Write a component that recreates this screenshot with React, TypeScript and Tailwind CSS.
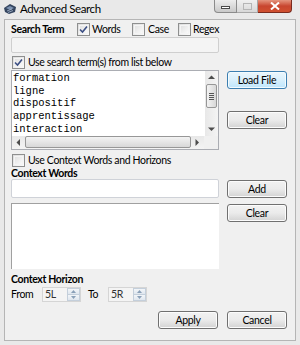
import React from "react";

const ui = { fontFamily: 'Lato, "Noto Sans", sans-serif' };

function Check({ checked }: { checked?: boolean }) {
  return (
    <span className="relative flex h-[13px] w-[13px] shrink-0 items-center justify-center border border-[#8e8f8f] bg-gradient-to-br from-[#dcdcdc] to-[#fbfbfb]">
      <span className="absolute inset-[1px] border border-[#f4f4f4] bg-gradient-to-br from-[#e2e2e2] to-[#f9f9f9]" />
      {checked && (
        <svg width="9" height="9" viewBox="0 0 9 9" className="relative">
          <path d="M1 4.5 L3.5 7 L8 1.5" fill="none" stroke="#3c4f84" strokeWidth="1.6" />
        </svg>
      )}
    </span>
  );
}

function Btn({ label, hot }: { label: string; hot?: boolean }) {
  return (
    <div
      className={
        "flex h-[18px] w-[60px] items-center justify-center rounded-[3px] border text-[10.5px] tracking-[-0.3px] text-black " +
        (hot
          ? "border-[#3c7fb1] bg-gradient-to-b from-[#eaf6fd] via-[#d9f0fc] to-[#bee6fd] shadow-[inset_0_0_0_1px_#f4fbfe]"
          : "border-[#707070] bg-gradient-to-b from-[#f2f2f2] via-[#ebebeb] to-[#d3d3d3] shadow-[inset_0_0_0_1px_#fcfcfc]")
      }
    >
      {label}
    </div>
  );
}

function Arrow({ dir }: { dir: "up" | "down" | "left" | "right" }) {
  const d = {
    up: "M0 4 L3.5 0.5 L7 4 Z",
    down: "M0 0.5 L3.5 4 L7 0.5 Z",
    left: "M4 0 L0.5 3.5 L4 7 Z",
    right: "M0.5 0 L4 3.5 L0.5 7 Z",
  }[dir];
  const v = dir === "up" || dir === "down";
  return (
    <svg width={v ? 7 : 5} height={v ? 5 : 7} viewBox={v ? "0 0 7 5" : "0 0 5 7"}>
      <path d={d} fill="#4d4d4d" />
    </svg>
  );
}

function Spinner({ value }: { value: string }) {
  return (
    <div className="flex h-[15px] w-[39px] border border-[#d5d5d5] bg-[#f4f4f4]">
      <span className="flex-1 pl-[2px] text-[10.5px] leading-[13px] text-[#333]">{value}</span>
      <div className="flex w-[13px] flex-col">
        <span className="flex flex-1 items-center justify-center border border-[#c4cfdb] bg-gradient-to-b from-[#f3f6f9] to-[#dfe6ee]">
          <svg width="5" height="3" viewBox="0 0 5 3"><path d="M0 3 L2.5 0 L5 3 Z" fill="#8aa0b8" /></svg>
        </span>
        <span className="flex flex-1 items-center justify-center border border-t-0 border-[#c4cfdb] bg-gradient-to-b from-[#f3f6f9] to-[#dfe6ee]">
          <svg width="5" height="3" viewBox="0 0 5 3"><path d="M0 0 L2.5 3 L5 0 Z" fill="#8aa0b8" /></svg>
        </span>
      </div>
    </div>
  );
}

const words = ["formation", "ligne", "dispositif", "apprentissage", "interaction"];

export default function App() {
  return (
    <div className="flex h-[345px] w-[300px] flex-col overflow-hidden bg-[#e9e9e9]" style={ui}>
      {/* title bar */}
      <div className="flex h-[19px] shrink-0 items-start">
        <svg width="14" height="12" viewBox="0 0 14 12" className="ml-[3px] mt-[3px]">
          <path d="M1 5 L7 1 L13 4 L12 9 L6 11 L2 9 Z" fill="#34455f" />
          <path d="M3 5 L7 3 L11 5 L7 7 Z" fill="#7d93b3" />
          <path d="M4 8 L9 6 M5 9.5 L10 7.5" stroke="#a9bad0" strokeWidth="0.8" />
        </svg>
        <span className="ml-[3px] mt-[1px] whitespace-nowrap text-[11.5px] leading-[15px] tracking-[-0.4px] text-black">Advanced Search</span>
        <div className="ml-auto mr-[8px] flex h-[13px]">
          <div className="flex w-[23px] items-center justify-center rounded-bl-[4px] border border-t-0 border-[#8b8b8b] bg-gradient-to-b from-[#ededed] to-[#c9c9c9]">
            <span className="mt-[3px] h-[3px] w-[9px] border border-[#4a4a4a] bg-white" />
          </div>
          <div className="flex w-[21px] items-center justify-center border border-l-0 border-t-0 border-[#a7a7a7] bg-gradient-to-b from-[#f0f0f0] to-[#d8d8d8]">
            <span className="h-[7px] w-[9px] border border-[#b5b5b5]" />
          </div>
          <div className="flex w-[34px] items-center justify-center rounded-br-[4px] border border-l-0 border-t-0 border-[#7a2b1e] bg-gradient-to-b from-[#e4957f] via-[#c8452f] to-[#d0502f]">
            <svg width="10" height="8" viewBox="0 0 10 8">
              <path d="M1 0.5 L9 7.5 M9 0.5 L1 7.5" stroke="#fff" strokeWidth="2" />
            </svg>
          </div>
        </div>
      </div>

      {/* client area */}
      <div className="mx-[4px] mb-[4px] flex flex-1 flex-col whitespace-nowrap border border-[#b5b5b5] bg-[#f0f0f0] pl-[6px] pr-[8px] text-[10.5px] leading-[13px] tracking-[-0.35px] text-black">
        <div className="mt-[3px] flex h-[13px] items-center">
          <span className="w-[66px] font-bold">Search Term</span>
          <Check checked />
          <span className="ml-[2px] w-[40px]">Words</span>
          <Check />
          <span className="ml-[3px] w-[30px]">Case</span>
          <Check />
          <span className="ml-[2px]">Regex</span>
        </div>
        <div className="mt-[1px] h-[16px] w-[208px] rounded-[2px] border border-[#cfcfcf] bg-[#f4f4f4]" />

        <div className="mt-[3px] flex h-[13px] items-center pl-[1px]">
          <Check checked />
          <span className="ml-[3px]">Use search term(s) from list below</span>
        </div>

        <div className="mt-[1px] flex gap-[8px]">
          <div className="flex h-[80px] w-[208px] flex-col border border-[#abadb3] bg-white">
            <div className="flex flex-1">
              <div
                className="flex-1 pl-[1px] pt-[1px] text-[10.5px] leading-[12.7px] tracking-normal text-black"
                style={{ fontFamily: '"Liberation Mono", monospace' }}
              >
                {words.map((w) => (
                  <div key={w}>{w}</div>
                ))}
              </div>
              <div className="flex w-[13px] flex-col items-center bg-gradient-to-r from-[#e8e8e8] to-[#f4f4f4]">
                <div className="flex h-[13px] items-center"><Arrow dir="up" /></div>
                <div className="flex h-[24px] w-[11px] flex-col items-center justify-center gap-[1px] rounded-[2px] border border-[#979797] bg-gradient-to-r from-[#f3f3f3] to-[#d8d8d8]">
                  <span className="h-px w-[5px] bg-[#555]" />
                  <span className="h-px w-[5px] bg-[#555]" />
                  <span className="h-px w-[5px] bg-[#555]" />
                  <span className="h-px w-[5px] bg-[#555]" />
                </div>
                <div className="flex-1" />
                <div className="flex h-[13px] items-center"><Arrow dir="down" /></div>
              </div>
            </div>
            <div className="flex h-[14px] items-center bg-gradient-to-b from-[#e8e8e8] to-[#f4f4f4]">
              <div className="flex w-[13px] justify-center"><Arrow dir="left" /></div>
              <div className="h-[12px] w-[166px] rounded-[2px] border border-[#979797] bg-gradient-to-b from-[#f3f3f3] to-[#d8d8d8]" />
              <div className="flex w-[13px] justify-center"><Arrow dir="right" /></div>
              <div className="flex-1 self-stretch bg-[#f0f0f0]" />
            </div>
          </div>
          <div className="flex flex-col pt-[1px]">
            <Btn label="Load File" hot />
            <div className="mt-[22px]">
              <Btn label="Clear" />
            </div>
          </div>
        </div>

        <div className="mt-[4px] flex h-[13px] items-center pl-[1px]">
          <Check />
          <span className="ml-[3px]">Use Context Words and Horizons</span>
        </div>
        <div className="h-[12px] font-bold leading-[12px]">Context Words</div>

        <div className="flex gap-[8px]">
          <div className="flex w-[208px] flex-col">
            <div className="h-[19px] rounded-[2px] border border-[#cfd2d8] bg-white" />
            <div className="mt-[5px] h-[66px] border-l border-t border-[#a0a0a0] bg-white" />
          </div>
          <div className="flex flex-col pt-[1px]">
            <Btn label="Add" />
            <div className="mt-[6px]">
              <Btn label="Clear" />
            </div>
          </div>
        </div>

        <div className="mt-[4px] h-[13px] font-bold">Context Horizon</div>
        <div className="mt-[1px] flex h-[15px] items-center">
          <span className="w-[31px]">From</span>
          <Spinner value="5L" />
          <span className="ml-[7px] w-[20px]">To</span>
          <Spinner value="5R" />
        </div>

        <div className="mt-[9px] flex justify-end gap-[9px]">
          <Btn label="Apply" />
          <Btn label="Cancel" />
        </div>
      </div>
    </div>
  );
}
